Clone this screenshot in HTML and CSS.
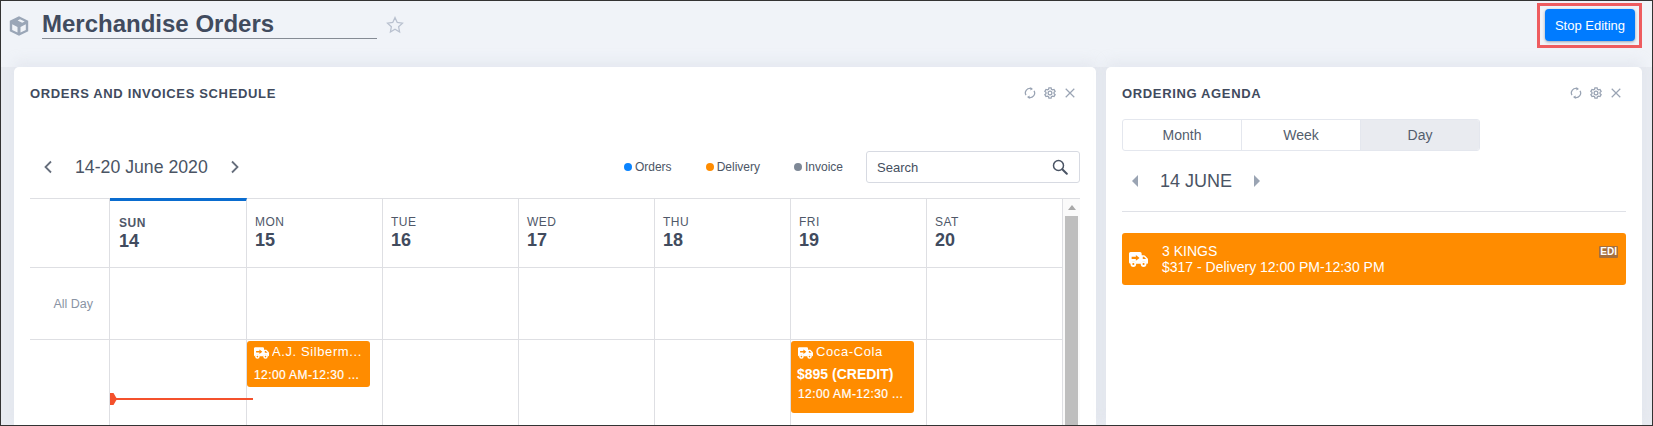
FILE: index.html
```html
<!DOCTYPE html>
<html lang="en">
<head>
<meta charset="utf-8">
<title>Merchandise Orders</title>
<link rel="stylesheet" href="styles.css">
</head>
<body>
<svg class="defs" width="0" height="0" aria-hidden="true">
  <symbol id="truck" viewBox="0 0 18 14">
    <path fill="#fff" d="M1.5 0h9A1.5 1.5 0 0 1 12 1.5V3h2.2c.4 0 .8.2 1 .4l2.3 2.4c.3.3.5.7.5 1.1V10c0 .6-.4 1-1 1h-.6a2.6 2.6 0 0 0-5.1 0H6.700a2.600 2.600 0 0 0-5.100 0H1.500C.700 11 0 10.300 0 9.500V1.500C0 .700.700 0 1.500 0z"/>
    <circle cx="4.100" cy="11.300" r="2.700" fill="#fff"/><circle cx="4.100" cy="11.300" r="1" fill="#ff8c00"/>
    <circle cx="13.800" cy="11.300" r="2.700" fill="#fff"/><circle cx="13.800" cy="11.300" r="1" fill="#ff8c00"/>
    <path fill="#ff8c00" d="M2.500 4.500h4V2.800L10 5.500 6.500 8.200V6.500h-4z"/>
    <path fill="#ff8c00" d="M13 4.500h1.200l2 2.100H13z"/>
  </symbol>
  <symbol id="refresh" viewBox="0 0 14 14">
    <path fill="none" stroke="currentColor" stroke-width="1.500" d="M2.300 9.500A5.200 5.200 0 0 1 8.500 2M11.700 4.500A5.200 5.200 0 0 1 5.500 12"/>
    <path fill="currentColor" d="M7.500 0l3 2.300-3 1.700zM6.500 14l-3-2.300 3-1.700z"/>
  </symbol>
  <symbol id="gear" viewBox="0 0 14 14">
    <path fill="none" stroke="currentColor" stroke-width="1.500" d="M5.700 1h2.600l.4 1.700 1.300.7 1.700-.5 1.300 2.200-1.300 1.200v1.400l1.300 1.200-1.300 2.200-1.700-.5-1.300.7-.4 1.700H5.700l-.4-1.700-1.300-.7-1.700.5L1 8.900l1.300-1.200V6.300L1 5.100l1.300-2.200 1.700.5 1.300-.7z"/>
    <circle cx="7" cy="7" r="2.200" fill="none" stroke="currentColor" stroke-width="1.500"/>
  </symbol>
  <symbol id="close" viewBox="0 0 14 14">
    <path fill="none" stroke="currentColor" stroke-width="1.400" d="M2 2l10 10M12 2L2 12"/>
  </symbol>
  <symbol id="search" viewBox="0 0 16 16">
    <circle cx="6.500" cy="6.500" r="5" fill="none" stroke="currentColor" stroke-width="1.500"/>
    <path stroke="currentColor" stroke-width="2" stroke-linecap="round" d="M10.500 10.500l4.300 4.300"/>
  </symbol>
</svg>
<div class="page">
  <header class="topbar">
    <svg class="cube" viewBox="0 0 20 20" aria-hidden="true">
      <path fill="#9aa6b7" d="M10 .3l9.200 4.500v10.400L10 19.700.8 15.200V4.800z"/>
      <path fill="#f0f3f8" d="M3.200 8.300l5.300 2.700v5.600l-5.300-2.600zM16.800 8.300l-5.300 2.700v5.600l5.300-2.600z"/>
      <path fill="#f0f3f8" d="M11 3.200l4.700 2.300-2.500 1.300-4.600-2.400z"/>
    </svg>
    <h1 class="title">Merchandise Orders</h1>
    <svg class="star" viewBox="0 0 20 20" aria-hidden="true">
      <path fill="none" stroke="#b9c1cf" stroke-width="1.400" d="M10 1.800l2.500 5.400 5.800.7-4.300 4 1.100 5.800-5.100-2.900-5.100 2.900 1.100-5.800-4.300-4 5.800-.7z"/>
    </svg>
    <div class="highlight"><button class="stop-btn" type="button">Stop Editing</button></div>
  </header>
  <main class="panels">
    <section class="card card-schedule">
      <div class="card-head">
        <h2 class="card-title">ORDERS AND INVOICES SCHEDULE</h2>
        <div class="card-tools">
          <svg class="tool"><use href="#refresh"/></svg>
          <svg class="tool"><use href="#gear"/></svg>
          <svg class="tool"><use href="#close"/></svg>
        </div>
      </div>
      <div class="cal-toolbar">
        <svg class="chev" viewBox="0 0 10 14" aria-hidden="true"><path d="M8 1.500L2.500 7 8 12.500"/></svg>
        <span class="range">14-20 June 2020</span>
        <svg class="chev chev-next" viewBox="0 0 10 14" aria-hidden="true"><path d="M2 1.500L7.500 7 2 12.500"/></svg>
        <div class="legend">
          <span class="legend-item"><i class="dot dot-blue"></i>Orders</span>
          <span class="legend-item"><i class="dot dot-orange"></i>Delivery</span>
          <span class="legend-item"><i class="dot dot-grey"></i>Invoice</span>
        </div>
        <div class="search"><span>Search</span><svg class="search-icon"><use href="#search"/></svg></div>
      </div>
      <div class="calendar">
        <div class="week">
          <div class="row row-head">
            <div class="gutter"></div>
            <div class="day day-today"><span class="dow">SUN</span><span class="num">14</span></div>
            <div class="day"><span class="dow">MON</span><span class="num">15</span></div>
            <div class="day"><span class="dow">TUE</span><span class="num">16</span></div>
            <div class="day"><span class="dow">WED</span><span class="num">17</span></div>
            <div class="day"><span class="dow">THU</span><span class="num">18</span></div>
            <div class="day"><span class="dow">FRI</span><span class="num">19</span></div>
            <div class="day"><span class="dow">SAT</span><span class="num">20</span></div>
          </div>
          <div class="row row-allday">
            <div class="gutter gutter-label">All Day</div>
            <div class="cell"></div><div class="cell"></div><div class="cell"></div><div class="cell"></div><div class="cell"></div><div class="cell"></div><div class="cell"></div>
          </div>
          <div class="row row-time">
            <div class="gutter"></div>
            <div class="cell"></div>
            <div class="cell">
              <div class="event">
                <div class="ev-name"><svg class="truck-sm"><use href="#truck"/></svg><span class="ev-clip">A.J. Silberm...</span></div>
                <div class="ev-time">12:00 AM-12:30 ...</div>
              </div>
            </div>
            <div class="cell"></div><div class="cell"></div><div class="cell"></div>
            <div class="cell">
              <div class="event event-tall">
                <div class="ev-name"><svg class="truck-sm"><use href="#truck"/></svg><span class="ev-clip">Coca-Cola</span></div>
                <div class="ev-amount">$895 (CREDIT)</div>
                <div class="ev-time">12:00 AM-12:30 ...</div>
              </div>
            </div>
            <div class="cell"></div>
            <div class="now-line"></div>
          </div>
        </div>
        <div class="scrollbar"><i class="scroll-arrow"></i><i class="scroll-thumb"></i></div>
      </div>
    </section>
    <section class="card card-agenda">
      <div class="card-head">
        <h2 class="card-title">ORDERING AGENDA</h2>
        <div class="card-tools">
          <svg class="tool"><use href="#refresh"/></svg>
          <svg class="tool"><use href="#gear"/></svg>
          <svg class="tool"><use href="#close"/></svg>
        </div>
      </div>
      <div class="tabs">
        <span class="tab">Month</span>
        <span class="tab">Week</span>
        <span class="tab tab-active">Day</span>
      </div>
      <div class="agenda-nav">
        <i class="tri tri-left"></i>
        <span class="agenda-date">14 JUNE</span>
        <i class="tri tri-right"></i>
      </div>
      <div class="agenda-event">
        <svg class="truck-lg"><use href="#truck"/></svg>
        <div class="agenda-text">
          <div>3 KINGS</div>
          <div>$317 - Delivery 12:00 PM-12:30 PM</div>
        </div>
        <span class="edi">EDI</span>
      </div>
    </section>
  </main>
</div>
</body>
</html>
```
FILE: styles.css
```css
* { box-sizing: border-box; }
html, body { margin: 0; padding: 0; }
body { font-family: "Liberation Sans", Arial, sans-serif; color: #414b5e; background: #f0f3f8; overflow: hidden; }
.defs { position: absolute; }
.page { width: 1653px; height: 426px; border: 1px solid #333; background: #eef1f6; overflow: hidden; }

.topbar { height: 66px; display: flex; align-items: flex-start; background: #f0f3f8; padding: 2px 10px 0 8px; }
.cube { width: 20px; height: 20px; margin: 13px 13px 0 0; flex: none; }
.title { width: 335px; height: 36px; margin: 0; font-size: 24px; line-height: 42px; font-weight: 700; color: #414b5e; border-bottom: 1px solid #858b94; }
.star { width: 18px; height: 18px; margin: 13px 0 0 9px; flex: none; }
.highlight { margin-left: auto; padding: 3px 4px 4px 5px; border: 3px solid #ee5c5f; height: 45px; }
.stop-btn { width: 90px; height: 32px; display: block; border: 0; border-radius: 4px; background: #007bff; color: #fff; font: 13px "Liberation Sans", Arial, sans-serif; box-shadow: 0 1px 3px rgba(40, 60, 90, .45); padding: 0; }

.panels { display: flex; gap: 10px; padding: 0 10px 0 13px; height: 360px; background: #e8ebf1; }
.card { background: #fff; border-radius: 5px 5px 0 0; flex: none; height: 360px; overflow: hidden; box-shadow: 0 -6px 12px rgba(210, 216, 226, .35); }
.card-schedule { width: 1082px; padding: 0 16px; }
.card-agenda { width: 536px; padding: 0 16px; }
.card-head { display: flex; align-items: center; justify-content: space-between; height: 52px; }
.card-title { margin: 0; font-size: 13px; font-weight: 700; letter-spacing: .65px; color: #414b5e; }
.card-tools { display: flex; gap: 8px; color: #9aa4b4; margin-right: 4px; }
.tool { width: 12px; height: 12px; display: block; }

.cal-toolbar { display: flex; align-items: center; height: 32px; margin-top: 32px; }
.chev { width: 10px; height: 14px; fill: none; stroke: #666e7c; stroke-width: 1.800; margin-left: 13px; flex: none; }
.chev-next { margin-left: 0; }
.range { font-size: 17.7px; margin: 0 22px; color: #4a5464; white-space: nowrap; }
.legend { display: flex; margin-left: auto; margin-right: 23px; gap: 34px; }
.legend-item { display: flex; align-items: center; font-size: 12px; color: #4c5666; }
.dot { width: 8px; height: 8px; border-radius: 50%; margin-right: 3px; }
.dot-blue { background: #0a84ff; }
.dot-orange { background: #ff8c00; }
.dot-grey { background: #7e8896; }
.search { width: 214px; height: 32px; border: 1px solid #d7dae2; border-radius: 3px; display: flex; align-items: center; justify-content: space-between; padding: 0 11px 0 10px; font-size: 13px; color: #454f60; flex: none; }
.search-icon { width: 16px; height: 16px; color: #4a5464; }

.calendar { display: flex; margin-top: 15px; border-top: 1px solid #dedfe3; height: 229px; }
.week { width: 1033px; flex: none; }
.row { display: grid; grid-template-columns: 80px 137px repeat(6, 136px); position: relative; }
.row-head { height: 69px; }
.row-allday { height: 72px; }
.row-time { height: 88px; }
.gutter { border-right: 1px solid #dedfe3; border-bottom: 1px solid #dedfe3; }
.row-time .gutter { border-bottom: 0; }
.gutter-label { font-size: 12.5px; color: #8a94a4; text-align: right; padding: 29px 16px 0 0; }
.day { border-right: 1px solid #dedfe3; border-bottom: 1px solid #dedfe3; padding: 16px 0 0 8px; display: flex; flex-direction: column; }
.day-today { border-top: 3px solid #0a6ccf; padding-top: 15px; margin-top: -1px; padding-left: 9px; }
.dow { font-size: 12px; line-height: 14px; letter-spacing: .5px; color: #4f5869; }
.day-today .dow { font-weight: 700; }
.num { font-size: 18px; line-height: 22px; font-weight: 700; color: #414b5e; }
.cell { border-right: 1px solid #dedfe3; border-bottom: 1px solid #dedfe3; padding: 1px 0 0; }
.row-time .cell { border-bottom: 0; }

.event { width: 123px; height: 46px; background: #ff8c00; border-radius: 3px; color: #fff; padding: 2px 0 0 7px; overflow: hidden; }
.event-tall { height: 72px; }
.ev-name { display: flex; align-items: center; font-size: 13px; line-height: 18px; white-space: nowrap; letter-spacing: .6px; }
.truck-sm { width: 15px; height: 12px; margin: 1px 3px 0 0; flex: none; }
.ev-clip { overflow: hidden; }
.ev-amount { font-size: 14px; font-weight: 700; line-height: 18px; margin: 4px 0 -3px -1px; white-space: nowrap; }
.ev-time { font-size: 12px; line-height: 16px; margin-top: 6px; white-space: nowrap; letter-spacing: .4px; -webkit-text-stroke: .2px #fff; }
.now-line { position: absolute; left: 80px; top: 58px; width: 143px; height: 2px; background: #f4512c; }
.now-line::before { content: ""; position: absolute; left: 0; top: -5px; width: 7px; height: 12px; background: #f4512c; clip-path: polygon(0 0, 50% 0, 100% 50%, 50% 100%, 0 100%); }

.scrollbar { width: 17px; flex: none; background: #fafafa; display: flex; flex-direction: column; align-items: center; padding-top: 6px; }
.scroll-arrow { width: 0; height: 0; border: 4px solid transparent; border-top-width: 0; border-bottom: 5px solid #a8a8a8; margin-bottom: 6px; }
.scroll-thumb { width: 13px; flex: 1; background: #bebebe; }

.tabs { display: flex; width: 358px; height: 32px; border: 1px solid #e4e7ee; border-radius: 3px; overflow: hidden; }
.tab { flex: 1; display: flex; align-items: center; justify-content: center; font-size: 14px; color: #535d6d; border-right: 1px solid #e4e7ee; }
.tab:last-child { border-right: 0; }
.tab-active { background: #e9ebf0; }
.agenda-nav { display: flex; align-items: center; height: 61px; border-bottom: 1px solid #dfe1e7; padding-left: 10px; }
.tri { width: 0; height: 0; border: 6px solid transparent; }
.tri-left { border-left-width: 0; border-right: 6px solid #9aa4b3; }
.tri-right { border-right-width: 0; border-left: 6px solid #9aa4b3; }
.agenda-date { font-size: 18px; margin: 0 22px; color: #4a5464; }
.agenda-event { display: flex; align-items: center; height: 52px; margin-top: 21px; background: #ff8c00; border-radius: 3px; color: #fff; padding: 0 8px 0 7px; position: relative; }
.truck-lg { width: 19px; height: 15px; flex: none; margin: 1px 14px 0 0; }
.agenda-text { font-size: 14px; line-height: 16px; }
.edi { position: absolute; right: 8px; top: 13px; background: #a66f3c; color: #fff; font-size: 10px; font-weight: 700; line-height: 12px; padding: 0 1px; border-radius: 1px; }
```
